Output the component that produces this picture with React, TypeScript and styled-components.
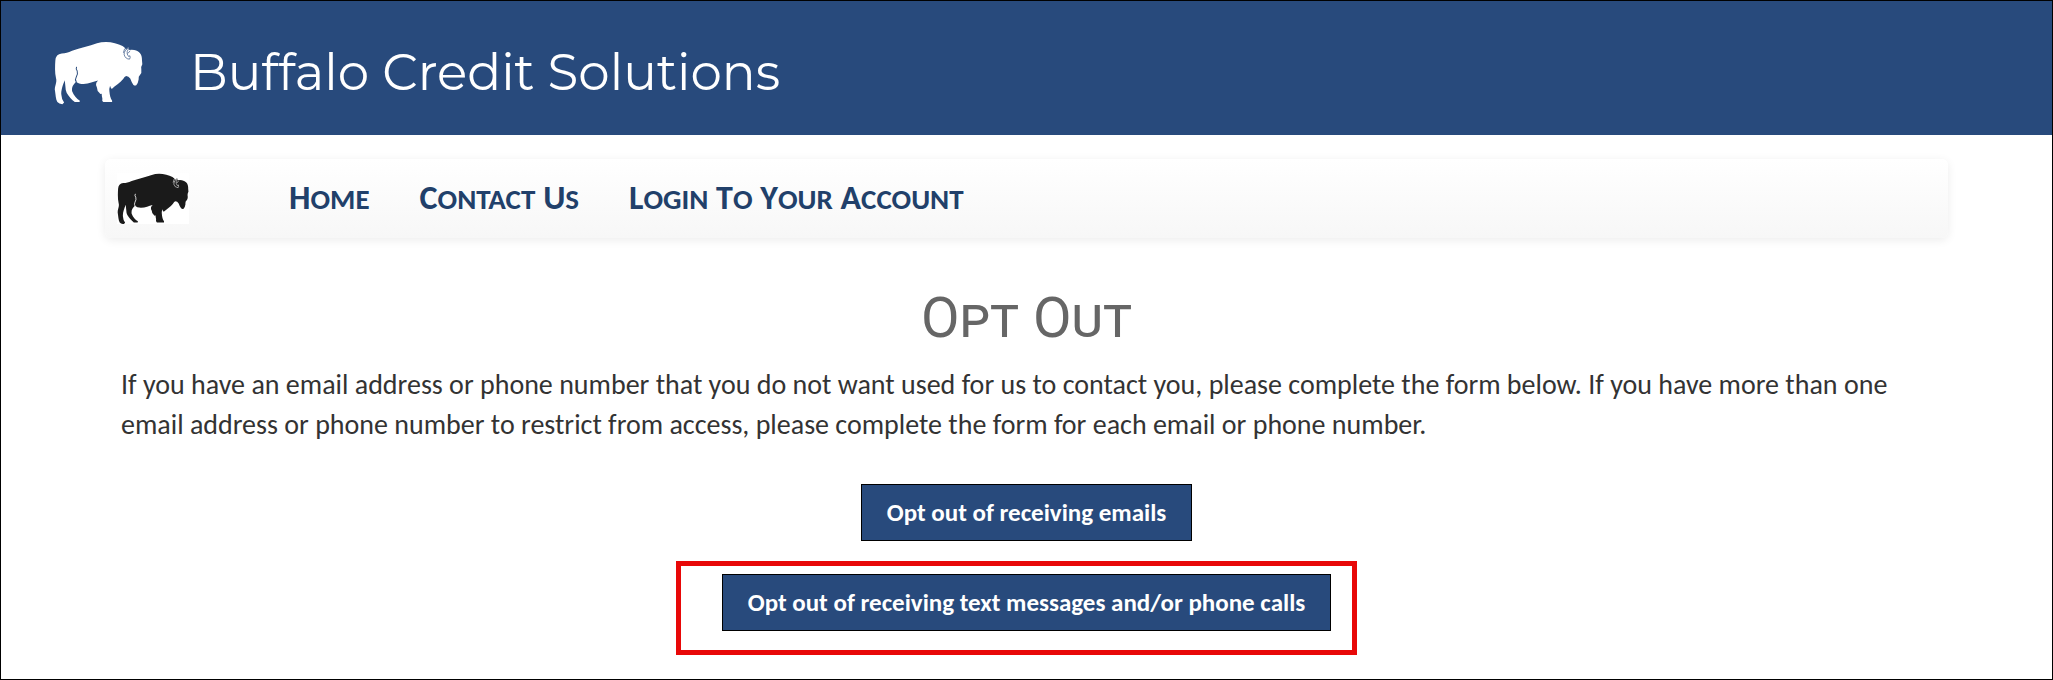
import React from 'react';
import styled, { createGlobalStyle } from 'styled-components';

const navy = '#284a7c';
const textFont = 'Carlito, Calibri, Lato, sans-serif';

const GlobalStyle = createGlobalStyle`
  *, *::before, *::after { box-sizing: border-box; }
  body { margin: 0; background: #fff; color: #333; font-family: ${textFont}; }
`;

const Page = styled.div`
  min-height: 100vh;
  border: 1px solid #000;
`;

const Header = styled.header`
  display: flex;
  align-items: center;
  gap: 47px;
  min-height: 134px;
  padding: 26px 53px 16px;
  background: ${navy};
`;

const SiteTitle = styled.div`
  color: #fff;
  font: 400 50px/64px Montserrat, Lato, sans-serif;
`;

const Bison = styled.svg<{ $width: number }>`
  display: block;
  flex: none;
  width: ${(p) => p.$width}px;
  height: auto;
`;

const Main = styled.main`
  padding: 24px 104px;
`;

const NavBar = styled.nav`
  display: flex;
  align-items: center;
  gap: 100px;
  min-height: 79px;
  padding: 0 12px;
  border-radius: 6px;
  background: linear-gradient(#fff, #f7f7f7);
  box-shadow: 0 2px 10px rgba(0, 0, 0, 0.08);
`;

const BrandLink = styled.a`
  display: block;
  background: #fff;
`;

const NavList = styled.ul`
  display: flex;
  flex-wrap: wrap;
  gap: 50px;
  margin: 0;
  padding: 0;
  list-style: none;
`;

const NavLink = styled.a`
  color: #21406a;
  font-size: 34px;
  font-weight: 700;
  line-height: 40px;
  text-decoration: none;
`;

const SmallCapital = styled.span`
  font-size: 29px;
  text-transform: uppercase;
`;

const Content = styled.section`
  padding: 48px 16px 0;
`;

const Heading = styled.h1`
  margin: 0;
  color: #666;
  font: 400 56px/64px Roboto, sans-serif;
  font-variant: small-caps;
  text-align: center;
`;

const Intro = styled.p`
  margin: 15px 0 39px;
  font-size: 28px;
  line-height: 40px;
`;

const Actions = styled.div`
  display: flex;
  flex-direction: column;
  align-items: center;
  gap: 33px;
`;

const Button = styled.button`
  display: block;
  padding: 12px 25px;
  border: 1px solid #000;
  border-radius: 0;
  background: ${navy};
  color: #fff;
  font: 700 25px/31px ${textFont};
  cursor: pointer;
`;

const Highlighted = styled.div`
  position: relative;

  &::after {
    content: '';
    position: absolute;
    inset: -13px -26px -24px -46px;
    border: 5px solid #e80808;
    pointer-events: none;
  }
`;

function BisonLogo({ color, outline, width }: { color: string; outline: string; width: number }) {
  return (
    <Bison $width={width} viewBox="15 19 265 190" role="img" aria-label="Bison">
      <path
        fill={color}
        d="M170 22C188 22 206 27 219 34Q226 38 229 44L237 37L239 46Q246 44 254 46C270 49 278 60 277 76L278 88Q274 94 275 103Q277 114 271 120Q266 123 267 134Q265 147 260 151Q255 153 251 149Q245 140 242 131Q237 123 230 123Q225 124 221 132C212 143 197 152 187 162Q183 158 182 152Q179 160 180 169C181 180 183 190 188 197V201H162Q157 198 159 190Q157 183 157 175Q154 179 150 173Q143 167 143 158Q138 151 141 143L146 137C132 140 120 147 103 147Q88 147 81 140C72 149 67 156 69 169C74 182 82 191 92 197L91 201H77C68 195 59 183 53 174Q49 165 49 155L47 136C41 151 35 168 37 180Q38 195 45 202L40 207Q30 207 25 201C20 192 20 180 18 168C15 155 25 143 21 130C17 113 18 92 19 77Q20 58 38 56C50 56 56 53 69 48C93 40 120 34 143 26Q155 22 170 22Z"
      />
      <g fill="none" stroke={outline} strokeLinecap="round" strokeLinejoin="round">
        <path strokeWidth="3" d="M82 97Q79 103 84 108Q87 117 81 127Q77 134 81 140" />
        <path strokeWidth="2" d="M238 38Q222 48 224 60Q228 73 240 73Q243 69 241 63L237 65Q231 58 233 50L238 40" />
        <path strokeWidth="2" d="M225 43L222 53M241 49L236 55" />
      </g>
    </Bison>
  );
}

function SmallCaps({ text }: { text: string }) {
  return (
    <>
      {text.split(' ').map((word, i) => (
        <React.Fragment key={word}>
          {i > 0 && ' '}
          {word[0]}
          <SmallCapital>{word.slice(1)}</SmallCapital>
        </React.Fragment>
      ))}
    </>
  );
}

const links = ['Home', 'Contact Us', 'Login To Your Account'];

export default function App() {
  return (
    <Page>
      <GlobalStyle />
      <Header>
        <BisonLogo color="#fff" outline={navy} width={89} />
        <SiteTitle>Buffalo Credit Solutions</SiteTitle>
      </Header>
      <Main>
        <NavBar aria-label="Main">
          <BrandLink href="#">
            <BisonLogo color="#1a1a1a" outline="#fff" width={72} />
          </BrandLink>
          <NavList>
            {links.map((label) => (
              <li key={label}>
                <NavLink href="#">
                  <SmallCaps text={label} />
                </NavLink>
              </li>
            ))}
          </NavList>
        </NavBar>
        <Content>
          <Heading>Opt Out</Heading>
          <Intro>
            If you have an email address or phone number that you do not want used for us to contact
            you, please complete the form below. If you have more than one email address or phone
            number to restrict from access, please complete the form for each email or phone number.
          </Intro>
          <Actions>
            <Button type="button">Opt out of receiving emails</Button>
            <Highlighted>
              <Button type="button">Opt out of receiving text messages and/or phone calls</Button>
            </Highlighted>
          </Actions>
        </Content>
      </Main>
    </Page>
  );
}
